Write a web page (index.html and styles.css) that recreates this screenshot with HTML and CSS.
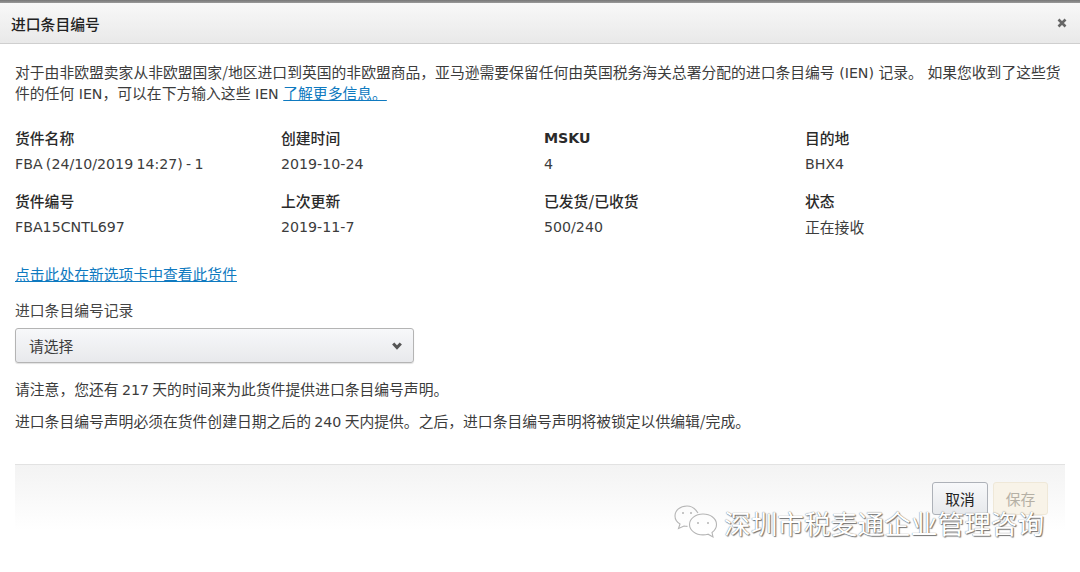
FILE: index.html
```html
<!DOCTYPE html>
<html lang="zh">
<head>
<meta charset="utf-8">
<title>进口条目编号</title>
<link rel="stylesheet" href="styles.css">
</head>
<body>
<div class="topstrip"></div>
<div class="modal">
  <header class="modal-head">
    <h1>进口条目编号</h1>
    <svg class="close" width="10" height="10" viewBox="0 0 10 10"><path d="M1.5 1.5l7 7M8.500 1.500l-7 7" stroke="#666" stroke-width="2.6" fill="none"/></svg>
  </header>
  <main class="modal-body">
    <p class="intro">对于由非欧盟卖家从非欧盟国家/地区进口到英国的非欧盟商品，亚马逊需要保留任何由英国税务海关总署分配的进口条目编号 <span class="lat">(IEN)</span> 记录。 如果您收到了这些货件的任何 <span class="lat">IEN</span>，可以在下方输入这些 <span class="lat">IEN</span> <a href="#">了解更多信息。</a></p>
    <div class="info">
      <div class="cell"><h2>货件名称</h2><p class="val">FBA (24/10/2019 14:27) - 1</p></div>
      <div class="cell"><h2>创建时间</h2><p class="val">2019-10-24</p></div>
      <div class="cell"><h2 class="head-lat">MSKU</h2><p class="val">4</p></div>
      <div class="cell"><h2>目的地</h2><p class="val">BHX4</p></div>
      <div class="cell"><h2>货件编号</h2><p class="val">FBA15CNTL697</p></div>
      <div class="cell"><h2>上次更新</h2><p class="val">2019-11-7</p></div>
      <div class="cell"><h2>已发货/已收货</h2><p class="val">500/240</p></div>
      <div class="cell"><h2>状态</h2><p class="val-cjk">正在接收</p></div>
    </div>
    <p class="shiplink"><a href="#">点击此处在新选项卡中查看此货件</a></p>
    <label class="field-label">进口条目编号记录</label>
    <div class="select">
      <span>请选择</span>
      <svg width="10" height="8" viewBox="0 0 10 8"><path d="M1.200 1.500L5 5.600l3.800-4.100" stroke="#555" stroke-width="3" fill="none"/></svg>
    </div>
    <p class="note first">请注意，您还有 <span class="lat">217</span> 天的时间来为此货件提供进口条目编号声明。</p>
    <p class="note">进口条目编号声明必须在货件创建日期之后的 <span class="lat">240</span> 天内提供。之后，进口条目编号声明将被锁定以供编辑/完成。</p>
  </main>
  <footer class="modal-foot">
    <button class="btn cancel" type="button">取消</button>
    <button class="btn save" type="button">保存</button>
  </footer>
</div>
<div class="watermark">
  <svg width="44" height="36" viewBox="0 0 44 36" fill="none" stroke="#b5b5b5" stroke-width="1.100">
    <path d="M24 8C21 3 17 1 13 1 6 1 1 5.500 1 11c0 3.500 2 6.200 5 8l-1.500 4.500L10 21c1.200.3 2.300.4 3.500.4"/>
    <path d="M29 9c7.500 0 13.500 4.500 13.500 10.500 0 3.300-1.800 6-4.500 8l1 4.500-5-2.800c-1.600.5-3.200.7-5 .7-7.500 0-13.500-4.700-13.500-10.400S21.500 9 29 9z"/>
    <circle cx="9" cy="8" r="1" fill="#b5b5b5" stroke="none"/><circle cx="17" cy="8" r="1" fill="#b5b5b5" stroke="none"/>
    <circle cx="24" cy="18" r="1" fill="#b5b5b5" stroke="none"/><circle cx="34" cy="18" r="1" fill="#b5b5b5" stroke="none"/>
  </svg>
  <span>深圳市税麦通企业管理咨询</span>
</div>
</body>
</html>
```
FILE: styles.css
```css
* { box-sizing: border-box; }
html, body { margin: 0; padding: 0; }
body {
  width: 1080px;
  height: 572px;
  overflow: hidden;
  background: #fff;
  color: #3c3c3c;
  font-family: "Noto Sans CJK SC", "Noto Sans", sans-serif;
  font-size: 14.8px;
  font-weight: 400;
  line-height: 21px;
  position: relative;
}
p { margin: 0; }
a { color: #0f7ac0; text-decoration: underline; }
.lat { font-family: "DejaVu Sans", sans-serif; font-size: 14.2px; line-height: 0; }
.topstrip { height: 3px; background: linear-gradient(#777, #999); }
.modal-head {
  height: 41px;
  display: flex;
  align-items: center;
  justify-content: space-between;
  padding: 0 13px 0 11px;
  background: linear-gradient(#f8f8f8, #e9e9e9);
  border-bottom: 1px solid #cfcfcf;
}
.modal-head h1 { margin: 0; font-size: 14.8px; font-weight: 500; color: #222; }
.modal-body { padding: 17px 15px 0; }
.intro { width: 1050px; word-spacing: 1.2px; }
.info {
  display: grid;
  grid-template-columns: 266px 263px 261px 1fr;
  row-gap: 15px;
  margin-top: 24px;
}
.cell h2 { margin: 0 0 6px; height: 21px; font-size: 14.8px; line-height: 21px; font-weight: 500; color: #2a2a2a; }
.cell h2.head-lat { font-family: "DejaVu Sans", sans-serif; font-size: 14.2px; font-weight: 700; line-height: 23px; }
.val { height: 21px; font-family: "DejaVu Sans", sans-serif; font-size: 14.2px; word-spacing: -1.25px; }
.val-cjk { height: 21px; line-height: 20px; }
.shiplink { margin-top: 25px; }
.field-label { display: block; margin-top: 15px; color: #444; }
.select {
  width: 399px;
  height: 35px;
  margin-top: 8px;
  padding: 0 11px 0 13px;
  display: flex;
  align-items: center;
  justify-content: space-between;
  border: 1px solid #b4b4b4;
  border-radius: 3px;
  background: linear-gradient(#f7f8fa, #e8e9ec);
  box-shadow: 0 1px 1px rgba(0,0,0,.12);
}
.note.first { margin-top: 15px; }
.note + .note { margin-top: 11px; }
.modal-foot {
  position: absolute;
  left: 15px;
  top: 464px;
  width: 1050px;
  height: 66px;
  padding: 17px 17px 0 0;
  display: flex;
  justify-content: flex-end;
  align-items: flex-start;
  gap: 5px;
  border-top: 1px solid #e2e2e2;
  background: linear-gradient(#f3f3f3, #fff);
}
.btn {
  width: 56px;
  height: 33px;
  padding: 0;
  font: inherit;
  font-size: 14.8px;
  border-radius: 3px;
}
.cancel { color: #222; border: 1px solid #adb1b8; background: linear-gradient(#f7f8fa, #e7e9ec); }
.save { width: 55px; color: #b5b0a5; border: 1px solid #efe8d8; background: #f8f3e8; }
.watermark {
  position: absolute;
  left: 674px;
  top: 505px;
  display: flex;
  align-items: center;
  gap: 6px;
  font-size: 26.7px;
  line-height: 36px;
  color: #fff;
  text-shadow: 0 0 1px #555, 1px 1px 1px #777;
}
```
